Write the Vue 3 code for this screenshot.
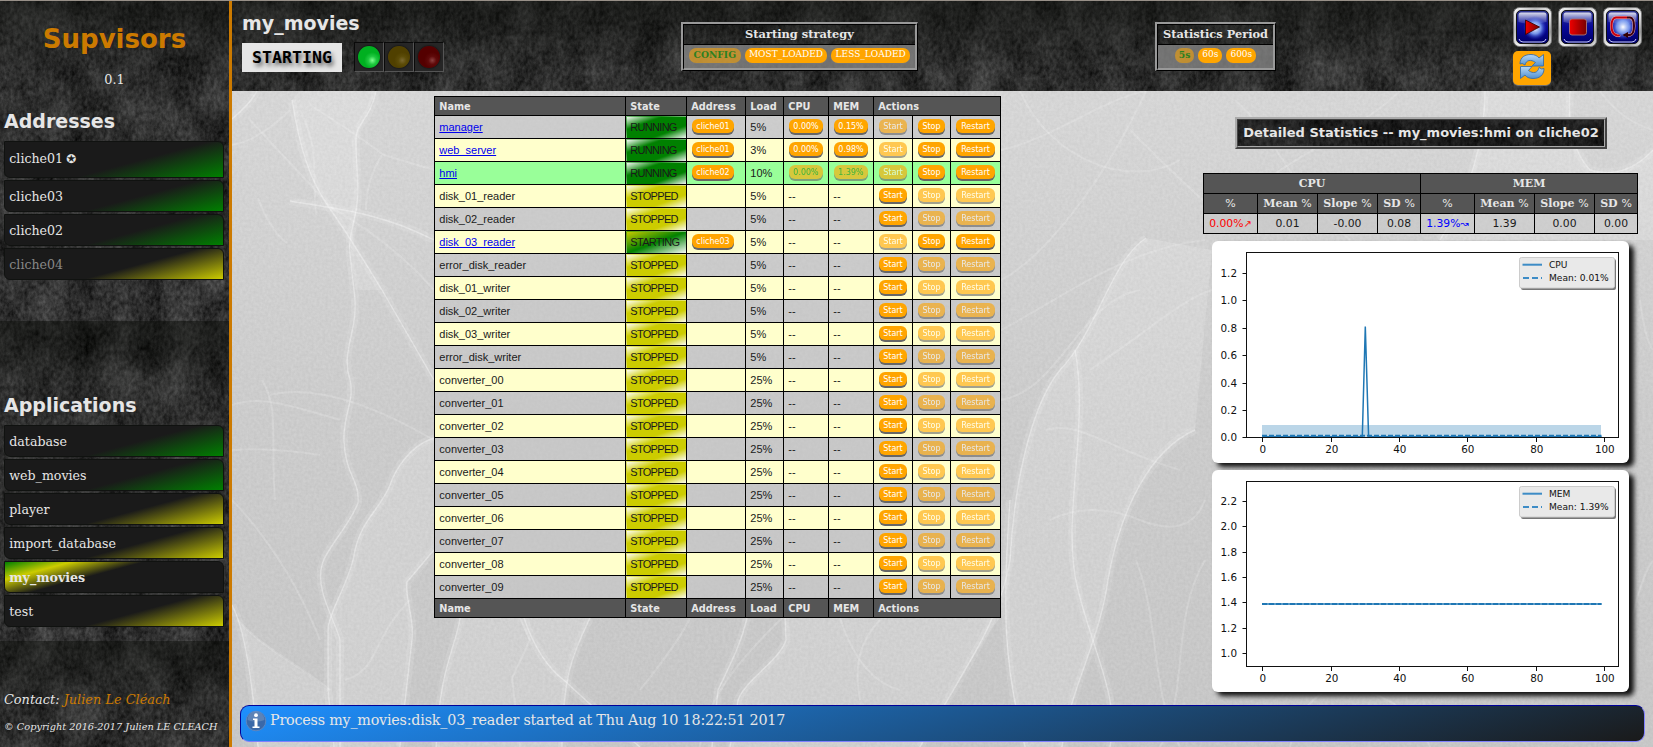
<script setup>
const addresses = [
  { name: 'cliche01', tone: 'running', master: true },
  { name: 'cliche03', tone: 'running' },
  { name: 'cliche02', tone: 'running' },
  { name: 'cliche04', tone: 'stopped', silent: true },
]

const applications = [
  { name: 'database', tone: 'running' },
  { name: 'web_movies', tone: 'running' },
  { name: 'player', tone: 'stopped' },
  { name: 'import_database', tone: 'stopped' },
  { name: 'my_movies', tone: 'starting', active: true },
  { name: 'test', tone: 'stopped' },
]

const stopped = (name, load) => ({ name, state: 'STOPPED', load })

const processes = [
  { name: 'manager', state: 'RUNNING', address: 'cliche01', load: '5%', cpu: '0.00%', mem: '0.15%' },
  { name: 'web_server', state: 'RUNNING', address: 'cliche01', load: '3%', cpu: '0.00%', mem: '0.98%' },
  { name: 'hmi', state: 'RUNNING', address: 'cliche02', load: '10%', cpu: '0.00%', mem: '1.39%', selected: true },
  stopped('disk_01_reader', '5%'),
  stopped('disk_02_reader', '5%'),
  { name: 'disk_03_reader', state: 'STARTING', address: 'cliche03', load: '5%' },
  stopped('error_disk_reader', '5%'),
  stopped('disk_01_writer', '5%'),
  stopped('disk_02_writer', '5%'),
  stopped('disk_03_writer', '5%'),
  stopped('error_disk_writer', '5%'),
  ...Array.from({ length: 10 }, (_, i) => stopped(`converter_0${i}`, '25%')),
]

const xTicks = [
  { x: 50.5, label: '0' },
  { x: 119.5, label: '20' },
  { x: 187.5, label: '40' },
  { x: 255.5, label: '60' },
  { x: 324.5, label: '80' },
  { x: 392.5, label: '100' },
]

const charts = [
  {
    id: 'cpu',
    label: 'CPU',
    mean: 'Mean: 0.01%',
    yTicks: [[32.5, '1.2'], [59.5, '1.0'], [87.5, '0.8'], [114.5, '0.6'], [142.5, '0.4'], [169.5, '0.2'], [196.5, '0.0']],
    line: 'M50.5 195.8H150.3L153.3 85.5L156.6 195.8H389.5',
    meanY: 194.8,
    band: true,
  },
  {
    id: 'mem',
    label: 'MEM',
    mean: 'Mean: 1.39%',
    yTicks: [[31.5, '2.2'], [56.5, '2.0'], [82.5, '1.8'], [107.5, '1.6'], [132.5, '1.4'], [158.5, '1.2'], [183.5, '1.0']],
    line: 'M50.5 134H389.5',
    meanY: 134,
  },
]

const ridges = [
  'M232 119Q250 104 257 91',
  'M376 91C370 120 357 122 356 137C355 160 360 180 357 205C354 225 348 238 350 255L354 290C360 330 340 350 350 380C355 400 343 415 344 440C345 475 360 480 358 503C350 525 325 550 322 565C315 590 335 620 340 640V747',
  'M292 100C300 150 310 180 328 206C345 230 365 262 382 290L434 380',
  'M290 201C330 208 380 212 434 240',
  'M434 438C410 445 395 470 390 485C380 510 360 520 354 555C350 580 330 610 328 628V690L334 747',
  'M434 550L407 582C405 600 415 620 412 640L400 747',
  'M232 605C245 630 252 680 258 747',
  'M460 618C455 650 440 665 436 747',
  'M590 618C575 650 563 670 562 747',
  'M524 618C535 650 550 670 565 681Q590 705 640 747',
  'M747 618C742 640 735 655 718 690L712 747',
  'M785 618L786 640C780 660 745 680 738 700L730 747',
  'M1146 238C1110 262 1098 330 1060 370C1035 400 1015 470 1010 560C1000 620 970 660 920 747',
  'M1010 500C1003 600 1002 660 1025 747',
  'M1195 430C1150 450 1120 510 1108 580C1100 640 1070 690 1062 747',
  'M1570 91C1568 125 1572 150 1590 170Q1625 180 1653 150',
  'M1485 91Q1484 170 1440 240',
  'M1075 350C1090 430 1060 520 1078 590S1120 700 1110 747',
]

const creases = [
  'M250 120L330 206', 'M310 105Q350 130 384 155L434 170', 'M258 198C268 225 280 238 287 243',
  'M316 215C312 170 320 150 300 110', 'M232 145Q260 140 290 110', 'M382 155Q366 180 366 210',
  'M328 206Q390 240 434 290', 'M232 405C260 395 290 405 340 420', 'M232 450Q270 447 320 455',
  'M240 622C265 650 300 665 330 690', 'M262 380C280 410 270 440 275 500', 'M232 500C270 540 300 590 320 640',
  'M410 600C370 640 380 670 345 680', 'M270 395Q330 380 434 440', 'M512 678L530 640L520 618', 'M512 678L520 747',
  'M700 747C705 690 760 640 790 610', 'M840 618Q860 680 900 690', 'M1001 150C1050 140 1100 100 1146 91',
  'M1001 280C1040 260 1100 190 1146 91', 'M1020 91C1050 160 1130 190 1180 160', 'M1001 330C1060 300 1120 250 1205 240',
  'M1046 430C1080 420 1110 450 1180 470', 'M1090 370C1150 330 1180 300 1212 290', 'M1001 400C1060 390 1080 300 1140 290',
  'M1136 560C1160 620 1150 690 1180 747', 'M1205 560C1170 620 1190 690 1160 747', 'M1290 747C1300 700 1330 680 1350 692',
  'M1430 747C1420 715 1390 700 1370 692', 'M1235 100C1280 140 1290 190 1350 240', 'M1400 91C1360 130 1300 150 1240 200',
  'M1640 300Q1645 340 1653 350', 'M1632 620Q1640 580 1653 560', 'M1130 130Q1180 180 1203 200', 'M1600 91Q1620 120 1653 130',
  'M1050 520Q1090 500 1140 520T1205 500', 'M640 690Q680 640 690 618', 'M860 700Q850 650 880 620',
]

const folds = [
  'M434 438C410 445 395 470 390 485C380 510 360 520 354 555C350 580 330 610 328 628V747H400L412 640C415 620 405 600 407 582L434 550Z',
  'M292 100C300 150 310 180 328 206C345 230 365 262 382 290L356 290L350 255L357 205V137L376 91H300Z',
  'M232 605C245 630 252 680 258 747H328V690C300 665 265 650 240 622Z',
  'M460 618H590C575 650 563 670 562 747H436C440 665 455 650 460 618Z',
  'M785 618L786 640C780 660 745 680 738 700L730 747H920C970 660 990 630 1000 618Z',
  'M1146 238C1110 262 1098 330 1060 370C1035 400 1015 470 1010 560C1003 600 1002 660 1025 747H1062C1070 690 1100 640 1108 580C1120 510 1150 450 1195 430L1212 250Z',
  'M1485 91Q1484 170 1440 240H1653V150Q1625 180 1590 170C1572 150 1568 125 1570 91Z',
]
</script>

<template>
  <div class="page">
    <svg width="0" height="0" class="defs">
      <defs>
        <filter id="stone" x="0" y="0" width="100%" height="100%" color-interpolation-filters="sRGB">
          <feTurbulence type="fractalNoise" baseFrequency="0.03 0.022" numOctaves="5" seed="8" result="clouds" />
          <feColorMatrix in="clouds" values="0.26 0.1 0 0 -0.005  0.26 0.1 0 0 -0.005  0.26 0.1 0 0 -0.005  0 0 0 0 1" result="base" />
          <feTurbulence type="fractalNoise" baseFrequency="0.28 0.2" numOctaves="3" seed="4" result="grit" />
          <feColorMatrix in="grit" values="0.24 0 0 0 0  0.24 0 0 0 0  0.24 0 0 0 0  0 0 0 0 1" result="fine" />
          <feComposite in="base" in2="fine" operator="arithmetic" k2="1" k3="1" k4="-0.1" />
          <feColorMatrix values="1 0 0 0 0  0 1 0 0 0  0 0 1 0 0  0 0 0 0 1" />
        </filter>
        <filter id="grain" x="0" y="0" width="100%" height="100%" color-interpolation-filters="sRGB">
          <feTurbulence type="fractalNoise" baseFrequency="0.35" numOctaves="2" seed="3" />
          <feColorMatrix values="1 0 0 0 0.2  1 0 0 0 0.2  1 0 0 0 0.2  0 0 0 0 0.06" />
        </filter>
        <linearGradient id="tileShade" x1="0" y1="0" x2="0" y2="1">
          <stop offset="0" stop-color="#0c0e0a" stop-opacity=".5" />
          <stop offset=".22" stop-color="#0c0e0a" stop-opacity=".12" />
          <stop offset="1" stop-color="#0c0e0a" stop-opacity="0" />
        </linearGradient>
        <linearGradient id="silver" x1="0" y1="0" x2="1" y2="1">
          <stop offset="0" stop-color="#fff" />
          <stop offset=".3" stop-color="#bbb" />
          <stop offset=".55" stop-color="#eee" />
          <stop offset=".8" stop-color="#999" />
          <stop offset="1" stop-color="#eee" />
        </linearGradient>
        <linearGradient id="gloss" x1="0" y1="0" x2="0" y2="1">
          <stop offset="0" stop-color="#fff" stop-opacity=".85" />
          <stop offset="1" stop-color="#8890e0" stop-opacity=".2" />
        </linearGradient>
        <radialGradient id="glow">
          <stop offset="0" stop-color="#fff" />
          <stop offset=".5" stop-color="#8cb4ff" stop-opacity=".8" />
          <stop offset="1" stop-color="#2030d0" stop-opacity="0" />
        </radialGradient>
        <linearGradient id="navy" x1="0" y1="0" x2="0" y2="1">
          <stop offset="0" stop-color="#303890" />
          <stop offset=".5" stop-color="#080898" />
          <stop offset="1" stop-color="#000068" />
        </linearGradient>
        <linearGradient id="red" x1="0" y1="0" x2="1" y2="0">
          <stop offset="0" stop-color="#f00000" />
          <stop offset="1" stop-color="#700" />
        </linearGradient>
        <linearGradient id="sky" x1="0" y1="0" x2="0" y2="1">
          <stop offset="0" stop-color="#b8d8f4" />
          <stop offset="1" stop-color="#5090d0" />
        </linearGradient>
        <linearGradient id="paper" x1="0" y1="0" x2="0" y2="1">
          <stop offset="0" stop-color="#d8d8d8" />
          <stop offset=".5" stop-color="#cdcdcd" />
          <stop offset="1" stop-color="#c8c8c8" />
        </linearGradient>
      </defs>
    </svg>

    <aside class="sidebar">
      <svg class="backdrop" width="229" height="746">
        <rect width="229" height="746" filter="url(#stone)" />
        <rect v-for="y in [0, 320, 640]" :key="y" :y="y" width="229" height="320" fill="url(#tileShade)" />
      </svg>
      <h1>Supvisors</h1>
      <p class="version">0.1</p>
      <h2>Addresses</h2>
      <ul class="menu addresses">
        <li v-for="a in addresses" :key="a.name" :class="[a.tone, { silent: a.silent, master: a.master }]">
          {{ a.name }}<span v-if="a.master" class="star">✪</span>
        </li>
      </ul>
      <h2>Applications</h2>
      <ul class="menu">
        <li v-for="a in applications" :key="a.name" :class="[a.tone, { active: a.active }]">{{ a.name }}</li>
      </ul>
      <p class="contact">Contact: <a>Julien Le Cléach</a></p>
      <p class="copyright">© Copyright 2016-2017 Julien LE CLEACH</p>
    </aside>

    <main class="main">
      <header class="header">
        <svg class="backdrop" width="1421" height="90">
          <rect width="1421" height="90" filter="url(#stone)" />
          <rect width="1421" height="320" fill="url(#tileShade)" />
        </svg>
        <div class="identity">
          <h2>my_movies</h2>
          <div class="status">
            <span class="state-label">STARTING</span>
            <div class="leds">
              <i class="led green"></i><i class="led amber"></i><i class="led red"></i>
            </div>
          </div>
        </div>
        <div class="bevel strategy">
          <div class="bevel-inner">
            <h3>Starting strategy</h3>
            <div class="choices">
              <span class="pill chosen">CONFIG</span><span class="pill">MOST_LOADED</span><span class="pill">LESS_LOADED</span>
            </div>
          </div>
        </div>
        <div class="bevel period">
          <div class="bevel-inner">
            <h3>Statistics Period</h3>
            <div class="choices">
              <span class="pill chosen">5s</span><span class="pill">60s</span><span class="pill">600s</span>
            </div>
          </div>
        </div>
        <div class="controls">
          <svg v-for="kind in ['start', 'stop', 'restart']" :key="kind" width="39" height="40" viewBox="0 0 39 40">
            <rect x=".5" y=".5" width="38" height="39" rx="6" fill="url(#silver)" stroke="#777" />
            <rect x="3.5" y="3.5" width="32" height="33" rx="4.5" fill="url(#navy)" stroke="#111" />
            <path d="M5.5 8Q5.500 5.500 8 5.500H31Q33.500 5.500 33.500 8V15Q19 19 5.500 15Z" fill="url(#gloss)" />
            <path d="M6 32Q7 35 10 35H29Q32 35 33 32" fill="none" stroke="#c8ccff" stroke-width="1" />
            <template v-if="kind === 'start'">
              <circle cx="22" cy="21" r="12" fill="url(#glow)" />
              <path d="M12.500 13L26.500 20L12.500 27.500Z" fill="url(#red)" stroke="#300" stroke-width=".8" />
            </template>
            <rect v-else-if="kind === 'stop'" x="11.500" y="12" width="17" height="16" rx="2.500" fill="url(#red)" stroke="#a87878" stroke-width=".9" />
            <template v-else>
              <circle cx="20" cy="20" r="13" fill="url(#glow)" />
              <path d="M16.500 28Q16 29 13 28Q8.500 26.500 8.500 19Q8.500 11 13 10.500H27Q31 11 31 19Q31 27 27 28H22" fill="none" stroke="#e8b0b0" stroke-width="3" />
              <path d="M16.500 28Q16 29 13 28Q8.500 26.500 8.500 19Q8.500 11 13 10.500H24" fill="none" stroke="#c80010" stroke-width="2" />
              <path d="M24 10.500H27Q31 11 31 19Q31 27 27 28H22" fill="none" stroke="#3c0010" stroke-width="2" />
              <path d="M19.500 28L25 25V31Z" fill="#300" />
            </template>
          </svg>
          <div class="refresh">
            <svg width="26" height="27" viewBox="0 0 26 27">
              <path d="M1 11C1 4 6 1.500 12 1.500C16 1.500 18.500 3 20 5L24.500 1.500V13H13L16.500 9.500C12 6 7 7 6 12Q3 9.500 1 11Z" fill="url(#sky)" stroke="#3a6ea8" stroke-width=".9" />
              <path d="M25 15.500C25 22.500 20 25.500 14 25.500C10 25.500 7.500 24 6 22L1.500 25.500V13.500H13L9.500 17.500C14 21 19 20 20 14.500Q23 17 25 15.500Z" fill="url(#sky)" stroke="#3a6ea8" stroke-width=".9" />
            </svg>
          </div>
        </div>
      </header>

      <section class="content">
        <svg class="backdrop" width="1421" height="656" viewBox="232 91 1421 656">
          <rect x="232" y="91" width="1421" height="656" fill="url(#paper)" />
          <path v-for="(d, i) in folds" :key="'f' + i" :d="d" fill="#fff" fill-opacity=".17" />
          <path v-for="(d, i) in creases" :key="'c' + i" :d="d" class="crease" />
          <path v-for="(d, i) in ridges" :key="'g' + i" :d="d" class="ridge-soft" />
          <path v-for="(d, i) in ridges" :key="'r' + i" :d="d" class="ridge" />
          <rect x="232" y="91" width="1421" height="656" filter="url(#grain)" />
        </svg>

        <div class="columns">
          <table class="processes">
            <colgroup>
              <col class="w-name" /><col class="w-state" /><col class="w-address" /><col class="w-load" /><col class="w-pct" /><col class="w-pct" />
              <col class="w-start" /><col class="w-stop" /><col class="w-restart" />
            </colgroup>
            <thead>
              <tr><th>Name</th><th>State</th><th>Address</th><th>Load</th><th>CPU</th><th>MEM</th><th colspan="3">Actions</th></tr>
            </thead>
            <tbody>
              <tr v-for="(p, i) in processes" :key="p.name" :class="{ odd: i % 2, selected: p.selected }">
                <td><a v-if="p.address" class="link">{{ p.name }}</a><template v-else>{{ p.name }}</template></td>
                <td class="state" :class="p.state.toLowerCase()">{{ p.state }}</td>
                <td><span v-if="p.address" class="btn addr">{{ p.address }}</span></td>
                <td>{{ p.load }}</td>
                <td><span v-if="p.cpu" class="btn" :class="{ picked: p.selected }">{{ p.cpu }}</span><template v-else>--</template></td>
                <td><span v-if="p.mem" class="btn" :class="{ picked: p.selected }">{{ p.mem }}</span><template v-else>--</template></td>
                <td><span class="btn" :class="{ off: p.state !== 'STOPPED' }">Start</span></td>
                <td><span class="btn" :class="{ off: p.state === 'STOPPED' }">Stop</span></td>
                <td><span class="btn" :class="{ off: p.state === 'STOPPED' }">Restart</span></td>
              </tr>
            </tbody>
            <tfoot>
              <tr><th>Name</th><th>State</th><th>Address</th><th>Load</th><th>CPU</th><th>MEM</th><th colspan="3">Actions</th></tr>
            </tfoot>
          </table>

          <div class="details">
            <div class="details-title">
              <div class="details-title-inner">
                <svg class="backdrop" width="366" height="26"><rect width="366" height="26" filter="url(#stone)" /><rect width="366" height="26" fill="#000" fill-opacity=".35" /></svg>
                <span>Detailed Statistics -- my_movies:hmi on cliche02</span>
              </div>
            </div>
            <table class="stats">
              <colgroup>
                <template v-for="n in 2" :key="n"><col class="s-a" /><col class="s-b" /><col class="s-b" /><col class="s-c" /></template>
              </colgroup>
              <tbody>
                <tr><th colspan="4">CPU</th><th colspan="4">MEM</th></tr>
                <tr><template v-for="n in 2" :key="n"><th><i>%</i></th><th>Mean <i>%</i></th><th>Slope <i>%</i></th><th>SD <i>%</i></th></template></tr>
                <tr>
                  <td class="up">0.00%<b>↗</b></td><td>0.01</td><td>-0.00</td><td>0.08</td>
                  <td class="steady">1.39%<b>↝</b></td><td>1.39</td><td>0.00</td><td>0.00</td>
                </tr>
              </tbody>
            </table>

            <div v-for="c in charts" :key="c.id" class="card">
              <svg width="417" height="222" class="chart">
                <rect v-if="c.band" x="50" y="184" width="339" height="12.500" fill="#1f77b4" fill-opacity=".3" />
                <path :d="c.line" class="series" />
                <path :d="`M50 ${c.meanY}H389.500`" class="mean" />
                <rect x="34.500" y="11.500" width="372" height="185" class="axis" />
                <g v-for="t in xTicks" :key="t.label">
                  <path :d="`M${t.x} 197v4`" class="axis" />
                  <text :x="t.x + .3" y="211.500" text-anchor="middle">{{ t.label }}</text>
                </g>
                <g v-for="t in c.yTicks" :key="t[1]">
                  <path :d="`M30.500 ${t[0]}h4`" class="axis" />
                  <text x="25" :y="t[0] + 3.500" text-anchor="end">{{ t[1] }}</text>
                </g>
                <rect x="309" y="18" width="95" height="31" rx="2" fill="#777" />
                <rect x="307.500" y="16.500" width="95" height="30.500" rx="2" fill="#e9e9e9" stroke="#ccc" />
                <path d="M310.500 23.700H330" class="legend-line" />
                <path d="M311 37H330" class="legend-line dashed" />
                <text x="337" y="26.700" class="legend">{{ c.label }}</text>
                <text x="337" y="40" class="legend">{{ c.mean }}</text>
              </svg>
            </div>
          </div>
        </div>

        <footer class="message">
          <svg width="22" height="22" viewBox="0 0 22 22">
            <circle cx="11" cy="11" r="9.800" fill="#3a68a8" stroke="#5c86c0" />
            <path d="M2.500 10A8.500 8.500 0 0 1 19.500 10Q11 13 2.500 10Z" fill="#fff" fill-opacity=".18" />
            <circle cx="11" cy="5.200" r="1.900" fill="#fff" />
            <path d="M8 8.500H12.500V16.500H14.500V18H7.500V16.500H9.500V10H8Z" fill="#fff" />
          </svg>
          <span>Process my_movies:disk_03_reader started at Thu Aug 10 18:22:51 2017</span>
        </footer>
      </section>
    </main>
  </div>
</template>

<style>
body {
  background: #222;
  overflow: hidden;
}
</style>

<style scoped>
* {
  box-sizing: border-box;
}
.page {
  display: flex;
  width: 1653px;
  height: 747px;
  border-top: 1px solid #989088;
  overflow: hidden;
  color: #e6e6e6;
  font-family: "DejaVu Serif", serif;
}
.defs {
  position: absolute;
}
.backdrop {
  position: absolute;
  left: 0;
  top: 0;
  z-index: 0;
}
h1, h2, h3, p, ul {
  margin: 0;
  padding: 0;
  position: relative;
}
h1, h2 {
  font-family: "DejaVu Sans", sans-serif;
  white-space: nowrap;
}

/* sidebar */
.sidebar {
  position: relative;
  width: 232px;
  height: 746px;
  flex: none;
  border-right: 3px solid #cc7a00;
  display: flex;
  flex-direction: column;
  overflow: hidden;
}
.sidebar h1 {
  margin-top: 23px;
  height: 30px;
  line-height: 30px;
  text-align: center;
  font-size: 26px;
  color: #cc7a00;
}
.version {
  margin-top: 17px;
  height: 17px;
  line-height: 17px;
  text-align: center;
  font-size: 12.800px;
}
.sidebar h2 {
  margin: 21px 0 0 4px;
  height: 24px;
  line-height: 24px;
  font-size: 19px;
}
.menu {
  list-style: none;
  margin: 8px 5px 0 4px;
  display: flex;
  flex-direction: column;
  gap: 2px;
  font-size: 12.600px;
}
.menu + h2 {
  margin-top: 113px;
}
.menu li {
  height: 32px;
  line-height: 32px;
  padding-left: 4.300px;
  border: 1px solid #101210;
  border-radius: 0 6px 0 6px;
  background: #1a1a1a;
}
.menu li.master {
  height: 37px;
  line-height: 33px;
}
.menu li.running {
  background: linear-gradient(165deg, #1a1a1a 58%, #008000);
}
.menu li.stopped {
  background: linear-gradient(165deg, #1a1a1a 58%, #cccc00);
}
.menu li.starting {
  background: linear-gradient(165deg, #008000, #cccc00 20%, #1a1a1a 42%);
}
.menu li.active {
  font-weight: bold;
}
.menu li.silent {
  color: #888;
}
.star {
  font-family: "DejaVu Sans", sans-serif;
  font-size: 12px;
  margin-left: 3px;
}
.contact {
  margin: auto 0 0 4px;
  height: 18px;
  line-height: 18px;
  font-size: 12.900px;
  font-style: italic;
  white-space: nowrap;
}
.contact a {
  color: #cc7a00;
}
.copyright {
  margin: 11px 0 13px 4px;
  height: 14px;
  line-height: 14px;
  font-size: 9.750px;
  font-style: italic;
  white-space: nowrap;
}

/* header */
.main {
  width: 1421px;
  height: 746px;
  display: flex;
  flex-direction: column;
}
.header {
  position: relative;
  height: 90px;
  flex: none;
  display: flex;
  overflow: hidden;
}
.identity {
  position: relative;
  width: 449px;
  padding: 10px 0 0 10px;
}
.identity h2 {
  height: 24px;
  line-height: 24px;
  font-size: 19px;
}
.status {
  display: flex;
  margin-top: 7px;
}
.state-label {
  width: 100px;
  height: 29px;
  margin-top: 1px;
  text-align: center;
  background: #e6e6e6;
  color: #000;
  font: bold 16.600px/29px "DejaVu Sans Mono", monospace;
  text-shadow: 2px 3px 4px #555;
}
.leds {
  display: flex;
  margin-left: 12px;
}
.led {
  width: 30px;
  height: 30px;
  background: #262626;
  border: 1px solid #0a0a0a;
  border-right-color: #555;
  border-bottom-color: #555;
  display: flex;
  align-items: center;
  justify-content: center;
}
.led::before {
  content: "";
  width: 22px;
  height: 22px;
  border-radius: 50%;
  box-shadow: 0 0 2px #000;
}
.led.green::before {
  background: radial-gradient(circle at 65% 65%, #80ff90, #20c840 20%, #00b020 40%);
}
.led.amber::before {
  background: radial-gradient(circle at 65% 65%, #7a6830, #5c4c08 20%, #504000 40%);
}
.led.red::before {
  background: radial-gradient(circle at 65% 65%, #8c4040, #600a0a 20%, #540000 40%);
}
.bevel {
  position: relative;
  margin-top: 21px;
  height: 49px;
  flex: none;
  border: 1px solid #000;
  border-top: 2px solid #999;
  border-left: 2px solid #999;
}
.bevel-inner {
  height: 46px;
  border: 2px solid #999;
  border-top: 1px solid #000;
  border-left: 1px solid #000;
}
.strategy {
  width: 237px;
}
.period {
  width: 121px;
  margin-left: 237px;
}
.bevel h3 {
  height: 20px;
  line-height: 18px;
  font-size: 11.400px;
  text-align: center;
  border-bottom: 1px solid #000;
  white-space: nowrap;
}
.choices {
  height: 23px;
  padding-top: 3px;
  display: flex;
  justify-content: center;
  gap: 4px;
  background: rgba(140, 140, 140, 0.75);
}
.pill {
  height: 15px;
  line-height: 13px;
  padding: 0 4.300px;
  border-radius: 7px;
  background: #ffa500;
  color: #fff;
  font-size: 9px;
  box-shadow: 0 1px 1px #777;
  white-space: nowrap;
}
.pill.chosen {
  padding: 0 4.600px;
  background: rgba(255, 165, 0, 0.55);
  color: #2c8020;
  font-size: 9.200px;
  font-weight: bold;
}
.period .pill {
  padding: 0 4px;
}
.controls {
  position: relative;
  width: 140px;
  margin: 6px 0 0 237px;
  display: flex;
  flex-wrap: wrap;
  align-content: flex-start;
  gap: 4px 6px;
}
.refresh {
  width: 38px;
  height: 34px;
  border-radius: 5px;
  background: #ffa500;
  box-shadow: 0 1px 1px #777;
  display: flex;
  justify-content: center;
  padding-top: 2px;
}

/* content */
.content {
  position: relative;
  height: 656px;
  display: flex;
  flex-direction: column;
}
.crease {
  fill: none;
  stroke: #fff;
  stroke-opacity: 0.18;
  stroke-width: 2;
}
.ridge {
  fill: none;
  stroke: #fff;
  stroke-opacity: 0.38;
  stroke-width: 1.4;
}
.ridge-soft {
  fill: none;
  stroke: #fff;
  stroke-opacity: 0.12;
  stroke-width: 8;
}
.columns {
  position: relative;
  display: flex;
  align-items: flex-start;
  padding: 5px 0 0 202px;
}
table {
  border-collapse: collapse;
  table-layout: fixed;
  flex: none;
}
th, td {
  border: 1px solid #000;
  padding: 0 5px 0 4.300px;
  white-space: nowrap;
  overflow: hidden;
}
th {
  background: #555;
  color: #e6e6e6;
}
.processes {
  width: 567px;
  color: #1a1a1a;
  font: 11px "Liberation Sans", Arial, sans-serif;
}
.w-name { width: 191px; }
.w-state { width: 61px; }
.w-address { width: 59px; }
.w-load { width: 38px; }
.w-pct { width: 45px; }
.w-start { width: 39px; }
.w-stop { width: 38px; }
.w-restart { width: 50px; }
.processes th {
  height: 19px;
  text-align: left;
  font: bold 10.800px/17px "DejaVu Sans Condensed", "DejaVu Sans", sans-serif;
}
.processes td {
  height: 23px;
  line-height: 14px;
  background: rgba(196, 196, 196, 0.55);
}
.processes .odd td {
  background: #ffffcc;
}
.processes .selected td {
  background: #99ff99;
}
.processes td.state {
  letter-spacing: -0.7px;
}
.processes td.state.running {
  background: linear-gradient(160deg, #fff, #008000 30%, #008000 70%, #fff);
}
.processes td.state.stopped {
  background: linear-gradient(160deg, #fff, #cccc00 30%, #cccc00 70%, #fff);
}
.processes td.state.starting {
  background: linear-gradient(160deg, #cccc00, #008000 50%, #fff);
}
.link {
  color: #0000ee;
  text-decoration: underline;
}
.btn {
  display: block;
  height: 14px;
  margin: 0 0 2px 0.700px;
  border-radius: 6px;
  background: #ffa500;
  color: #fff;
  text-align: center;
  font: 8.900px/14px "DejaVu Sans Condensed", "DejaVu Sans", sans-serif;
  box-shadow: 0 2px 0 #666;
}
.btn.addr {
  width: 42px;
}
.btn.off {
  opacity: 0.6;
}
.btn.picked {
  opacity: 0.6;
  color: #008000;
}

/* details */
.details {
  width: 435px;
  margin-left: 202px;
  padding-top: 21px;
  display: flex;
  flex-direction: column;
}
.details-title {
  margin-left: 32px;
  width: 372px;
  height: 32px;
  border: 2px solid #444;
  border-top-color: #aaa;
  border-left-color: #aaa;
}
.details-title-inner {
  position: relative;
  height: 28px;
  border: 1px solid #aaa;
  border-top-color: #444;
  border-left-color: #444;
  overflow: hidden;
  text-align: center;
  font: bold 13px/25px "DejaVu Sans", sans-serif;
  white-space: nowrap;
}
.details-title-inner span {
  position: relative;
}
.stats {
  width: 435px;
  margin-top: 24px;
  color: #1a1a1a;
  font: 10.800px "DejaVu Sans", sans-serif;
  text-align: center;
}
.s-a { width: 54px; }
.s-b { width: 60px; }
.s-c { width: 43px; }
.stats th, .stats td {
  height: 20px;
  padding: 0;
  line-height: 16px;
}
.stats td {
  background: rgba(196, 196, 196, 0.5);
}
.stats th {
  font: bold 11px/16px "DejaVu Serif", serif;
}
.stats th i {
  font: 11px "DejaVu Sans", sans-serif;
}
.stats b {
  font-weight: normal;
  font-size: 10px;
}
.stats .up {
  color: #f00;
}
.stats .steady {
  color: #00f;
}
.card {
  width: 417px;
  height: 222px;
  margin: 7px 0 0 9px;
  border-radius: 6px;
  background: #fff;
  box-shadow: 5px 4px 5px #111;
}
.chart {
  display: block;
}
.chart text {
  font: 10.400px "DejaVu Sans", sans-serif;
  fill: #111;
}
.chart text.legend {
  font-size: 9.100px;
}
.axis {
  fill: none;
  stroke: #111;
}
.series {
  fill: none;
  stroke: #1f77b4;
  stroke-width: 1.5;
}
.mean {
  fill: none;
  stroke: #1f77b4;
  stroke-width: 2;
  stroke-dasharray: 5 2;
}
.legend-line {
  stroke: #3d8cc6;
  stroke-width: 2;
}
.legend-line.dashed {
  stroke-dasharray: 6 3;
}

.message {
  position: relative;
  margin: auto 8px 5px;
  height: 37px;
  display: flex;
  padding: 4px 0 0 4px;
  border: 1px solid #8080ff;
  border-top-color: #000099;
  border-left-color: #000099;
  border-radius: 9px;
  background: linear-gradient(165deg, #1e90ff, #1a1a1a);
  font-size: 14.300px;
  letter-spacing: -0.200px;
}
.message svg {
  flex: none;
}
.message span {
  margin-left: 3px;
  line-height: 20px;
  white-space: nowrap;
}
</style>
